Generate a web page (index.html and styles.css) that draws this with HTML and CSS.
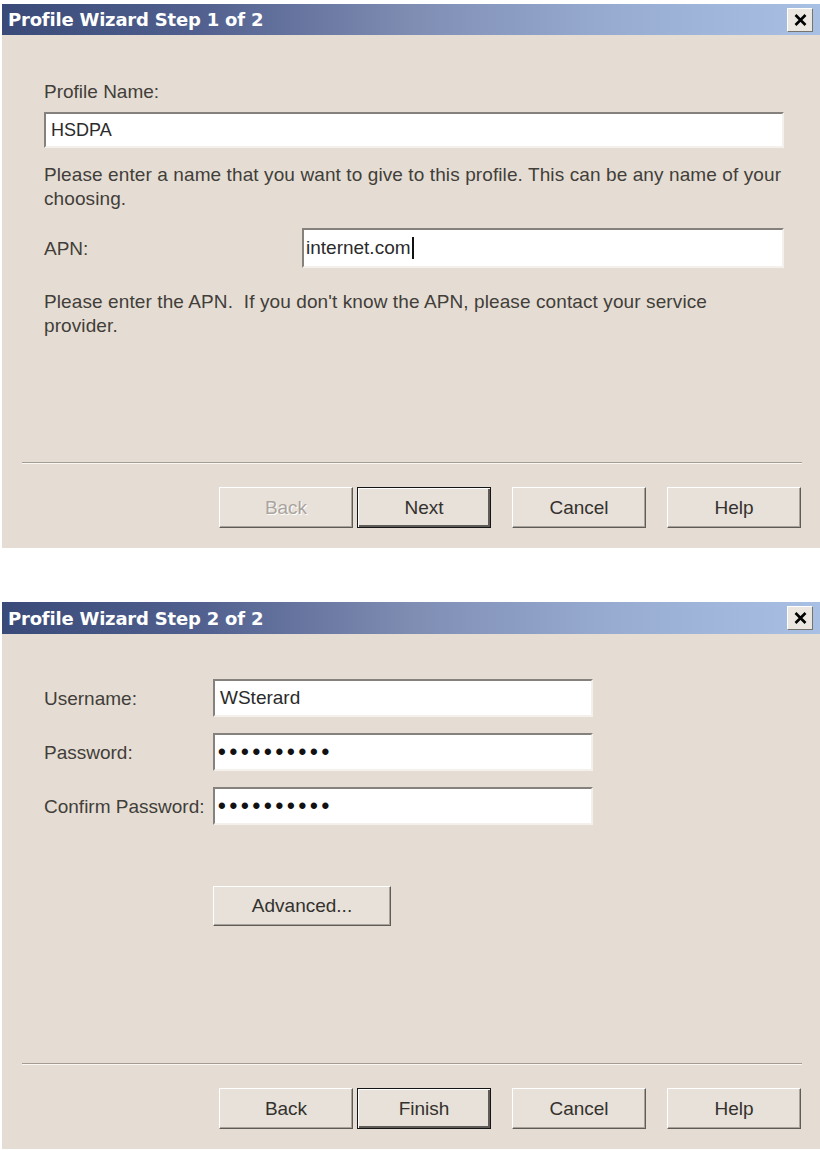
FILE: index.html
```html
<!DOCTYPE html>
<html lang="en">
<head>
    <meta charset="UTF-8">
    <meta name="viewport" content="width=device-width, initial-scale=1.0">
    <title>Profile Wizard</title>
    <link rel="stylesheet" href="styles.css">
</head>
<body>

    <!-- Step 1 -->
    <div class="dialog step1">
        <div class="titlebar">
            <span class="title">Profile Wizard Step 1 of 2</span>
            <button class="close-btn" aria-label="Close">
                <svg width="13" height="12" viewBox="0 0 13 12"><path d="M1.5 1 L11.5 11 M11.5 1 L1.5 11" stroke="#000" stroke-width="2.6" fill="none"/></svg>
            </button>
        </div>
        <div class="content">
            <div class="label top-label">Profile Name:</div>
            <div class="field name-field">HSDPA</div>
            <p class="hint first-hint">Please enter a name that you want to give to this profile. This can be any name of your choosing.</p>
            <div class="apn-row">
                <span class="label">APN:</span>
                <div class="field apn-field">internet.com<span class="caret"></span></div>
            </div>
            <p class="hint apn-hint">Please enter the APN.&nbsp; If you don't know the APN, please contact your service provider.</p>
        </div>
        <div class="footer">
            <div class="separator"></div>
            <div class="buttons">
                <button class="btn" disabled>Back</button>
                <button class="btn default">Next</button>
                <button class="btn">Cancel</button>
                <button class="btn">Help</button>
            </div>
        </div>
    </div>

    <!-- Step 2 -->
    <div class="dialog step2">
        <div class="titlebar tall">
            <span class="title">Profile Wizard Step 2 of 2</span>
            <button class="close-btn" aria-label="Close">
                <svg width="13" height="12" viewBox="0 0 13 12"><path d="M1.5 1 L11.5 11 M11.5 1 L1.5 11" stroke="#000" stroke-width="2.6" fill="none"/></svg>
            </button>
        </div>
        <div class="content">
            <div class="form-grid">
                <span class="label">Username:</span>
                <div class="field short-field">WSterard</div>
                <span class="label">Password:</span>
                <div class="field short-field dots">••••••••••</div>
                <span class="label">Confirm Password:</span>
                <div class="field short-field dots">••••••••••</div>
            </div>
            <button class="btn advanced-btn">Advanced...</button>
        </div>
        <div class="footer">
            <div class="separator"></div>
            <div class="buttons">
                <button class="btn">Back</button>
                <button class="btn default">Finish</button>
                <button class="btn">Cancel</button>
                <button class="btn">Help</button>
            </div>
        </div>
    </div>

</body>
</html>
```

FILE: styles.css
```css
body {
    margin: 0;
    background-color: #ffffff;
    font-family: "Liberation Sans", Arial, sans-serif;
    font-size: 19px;
    color: #423e3a;
}

.dialog {
    margin-left: 2px;
    background-color: #e5ddd3;
    display: flex;
    flex-direction: column;
}

.step1 {
    margin-top: 4px;
    height: 544px;
}

.step2 {
    margin-top: 54px;
    height: 547px;
}

.titlebar {
    height: 31px;
    display: flex;
    align-items: center;
    justify-content: space-between;
    padding: 0 7px 0 6px;
    background: linear-gradient(to right, #394a79 0%, #52618f 25%, #7f8db3 50%, #98acd2 75%, #a8c0e3 100%);
}

.titlebar.tall {
    height: 32px;
}

.title {
    color: #ffffff;
    font-family: "DejaVu Sans", Verdana, sans-serif;
    font-weight: bold;
    font-size: 18px;
    letter-spacing: -0.2px;
}

.close-btn {
    width: 26px;
    height: 24px;
    padding: 0;
    display: flex;
    align-items: center;
    justify-content: center;
    background-color: #ebe6df;
    border: 1px solid;
    border-color: #ffffff #77736e #77736e #ffffff;
}

.content {
    flex: 1;
    padding: 0 36px 0 42px;
}

.label {
    line-height: 23px;
}

.top-label {
    margin-top: 45px;
}

.field {
    background-color: #ffffff;
    border: 2px solid;
    border-color: #85817c #f4f1ec #f4f1ec #85817c;
    box-sizing: border-box;
    padding: 0 5px;
    display: flex;
    align-items: center;
    color: #2b2b2b;
}

.name-field {
    margin-top: 9px;
    height: 36px;
    font-size: 18px;
}

.hint {
    margin: 0;
    line-height: 24px;
    letter-spacing: 0.1px;
}

.first-hint {
    margin-top: 15px;
}

.apn-row {
    margin-top: 17px;
    display: flex;
    align-items: center;
    justify-content: space-between;
}

.apn-field {
    width: 482px;
    height: 40px;
    padding-left: 2px;
}

.caret {
    display: inline-block;
    width: 2px;
    height: 22px;
    margin-left: 1px;
    background-color: #111111;
}

.apn-hint {
    margin-top: 22px;
}

.form-grid {
    margin-top: 45px;
    display: grid;
    grid-template-columns: 169px 380px;
    row-gap: 16px;
    align-items: center;
}

.short-field {
    height: 38px;
}

.dots {
    font-size: 22px;
    font-weight: bold;
    letter-spacing: 3.8px;
    color: #111111;
    padding-left: 3px;
}

.footer {
    padding-bottom: 20px;
}

.separator {
    margin: 0 18px 0 20px;
    border-top: 1px solid #a39c93;
    border-bottom: 1px solid #fbf8f4;
}

.buttons {
    margin-top: 23px;
    padding-right: 19px;
    display: flex;
    justify-content: flex-end;
}

.btn {
    width: 134px;
    height: 41px;
    margin-left: 21px;
    background-color: #e7e1d9;
    border: 1px solid;
    border-color: #ffffff #5f5b57 #5f5b57 #ffffff;
    box-shadow: inset -1px -1px 0 #a9a39b;
    font-family: "Liberation Sans", Arial, sans-serif;
    font-size: 19px;
    color: #34312e;
}

.btn:first-child {
    margin-left: 0;
}

.btn.default {
    margin-left: 4px;
    border-color: #151515;
    box-shadow: inset 1px 1px 0 #ffffff, inset -2px -2px 0 #5f5b57;
}

.btn:disabled {
    color: #aaa49d;
    text-shadow: 1px 1px 0 #ffffff;
}

.advanced-btn {
    margin: 61px 0 0 169px;
    width: 178px;
    height: 40px;
}
```
